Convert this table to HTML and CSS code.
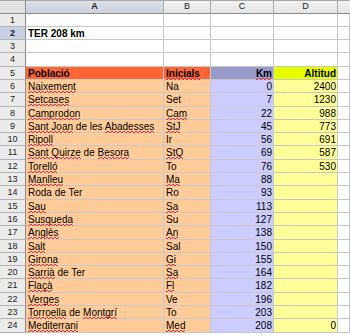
FILE: index.html
```html
<!DOCTYPE html>
<html lang="ca">
<head>
<meta charset="utf-8">
<title>TER 208 km</title>
<link rel="stylesheet" href="styles.css">
</head>
<body>
<div class="sheet">
  <div class="h corner"></div>
  <div class="h col sel">A</div>
  <div class="h col">B</div>
  <div class="h col">C</div>
  <div class="h col">D</div>
  <div class="h col last"></div>

  <div class="h row">1</div><div class="c"></div><div class="c"></div><div class="c"></div><div class="c"></div><div class="c"></div>
  <div class="h row sel">2</div><div class="c b">TER 208 km</div><div class="c"></div><div class="c"></div><div class="c"></div><div class="c"></div>
  <div class="h row">3</div><div class="c"></div><div class="c"></div><div class="c"></div><div class="c"></div><div class="c"></div>
  <div class="h row">4</div><div class="c"></div><div class="c"></div><div class="c"></div><div class="c"></div><div class="c"></div>
  <div class="h row">5</div><div class="c b hd-a">Població</div><div class="c b hd-a"><span class="sp">Inicials</span></div><div class="c b hd-c num"><span class="sp">Km</span></div><div class="c b hd-d num">Altitud</div><div class="c"></div>

  <div class="h row">6</div><div class="c pa"><span class="sp">Naixement</span></div><div class="c pa">Na</div><div class="c pc num">0</div><div class="c pd num">2400</div><div class="c"></div>
  <div class="h row">7</div><div class="c pa"><span class="sp">Setcases</span></div><div class="c pa">Set</div><div class="c pc num">7</div><div class="c pd num">1230</div><div class="c"></div>
  <div class="h row">8</div><div class="c pa"><span class="sp">Camprodon</span></div><div class="c pa"><span class="sp">Cam</span></div><div class="c pc num">22</div><div class="c pd num">988</div><div class="c"></div>
  <div class="h row">9</div><div class="c pa"><span class="sp">Sant Joan</span> de les <span class="sp">Abadesses</span></div><div class="c pa"><span class="sp">StJ</span></div><div class="c pc num">45</div><div class="c pd num">773</div><div class="c"></div>
  <div class="h row">10</div><div class="c pa"><span class="sp">Ripoll</span></div><div class="c pa">Ir</div><div class="c pc num">56</div><div class="c pd num">691</div><div class="c"></div>
  <div class="h row">11</div><div class="c pa"><span class="sp">Sant Quirze</span> de <span class="sp">Besora</span></div><div class="c pa"><span class="sp">StQ</span></div><div class="c pc num">69</div><div class="c pd num">587</div><div class="c"></div>
  <div class="h row">12</div><div class="c pa"><span class="sp">Torelló</span></div><div class="c pa">To</div><div class="c pc num">76</div><div class="c pd num">530</div><div class="c"></div>
  <div class="h row">13</div><div class="c pa"><span class="sp">Manlleu</span></div><div class="c pa"><span class="sp">Ma</span></div><div class="c pc num">88</div><div class="c pd num"></div><div class="c"></div>
  <div class="h row">14</div><div class="c pa">Roda de Ter</div><div class="c pa">Ro</div><div class="c pc num">93</div><div class="c pd num"></div><div class="c"></div>
  <div class="h row">15</div><div class="c pa"><span class="sp">Sau</span></div><div class="c pa"><span class="sp">Sa</span></div><div class="c pc num">113</div><div class="c pd num"></div><div class="c"></div>
  <div class="h row">16</div><div class="c pa"><span class="sp">Susqueda</span></div><div class="c pa">Su</div><div class="c pc num">127</div><div class="c pd num"></div><div class="c"></div>
  <div class="h row">17</div><div class="c pa"><span class="sp">Anglès</span></div><div class="c pa"><span class="sp">An</span></div><div class="c pc num">138</div><div class="c pd num"></div><div class="c"></div>
  <div class="h row">18</div><div class="c pa"><span class="sp">Salt</span></div><div class="c pa">Sal</div><div class="c pc num">150</div><div class="c pd num"></div><div class="c"></div>
  <div class="h row">19</div><div class="c pa"><span class="sp">Girona</span></div><div class="c pa"><span class="sp">Gi</span></div><div class="c pc num">155</div><div class="c pd num"></div><div class="c"></div>
  <div class="h row">20</div><div class="c pa"><span class="sp">Sarrià</span> de Ter</div><div class="c pa"><span class="sp">Sa</span></div><div class="c pc num">164</div><div class="c pd num"></div><div class="c"></div>
  <div class="h row">21</div><div class="c pa"><span class="sp">Flaçà</span></div><div class="c pa"><span class="sp">Fl</span></div><div class="c pc num">182</div><div class="c pd num"></div><div class="c"></div>
  <div class="h row">22</div><div class="c pa"><span class="sp">Verges</span></div><div class="c pa">Ve</div><div class="c pc num">196</div><div class="c pd num"></div><div class="c"></div>
  <div class="h row">23</div><div class="c pa"><span class="sp">Torroella</span> de <span class="sp">Montgrí</span></div><div class="c pa">To</div><div class="c pc num">203</div><div class="c pd num"></div><div class="c"></div>
  <div class="h row">24</div><div class="c pa"><span class="sp">Mediterrani</span></div><div class="c pa"><span class="sp">Med</span></div><div class="c pc num">208</div><div class="c pd num">0</div><div class="c"></div>
</div>
</body>
</html>
```
FILE: styles.css
```css
html, body {
  margin: 0;
  padding: 0;
  background: #ffffff;
}

.sheet {
  display: grid;
  grid-template-columns: 26px 138px 47px 63px 64px 12px;
  grid-template-rows: 13.5px;
  grid-auto-rows: 13.3px;
  width: 350px;
  font-family: "Liberation Sans", Arial, sans-serif;
  font-size: 10px;
  color: #000;
}

.c {
  box-sizing: border-box;
  border-right: 1px solid #c8c8c8;
  border-bottom: 1px solid #c8c8c8;
  padding: 1px 2px 0 2px;
  line-height: 11.5px;
  white-space: nowrap;
}

.b { font-weight: bold; }
.num { text-align: right; padding-right: 1px; }

.hd-a { background: #ff6633; }
.hd-c { background: #9999cc; }
.hd-d { background: #e6ff00; }
.pa { background: #ffcc99; }
.pc { background: #ccccff; }
.pd { background: #ffff99; }

.sp {
  position: relative;
}

.sp::after {
  content: "";
  position: absolute;
  left: 0;
  right: 0;
  bottom: -1px;
  height: 2px;
  background-image:
    repeating-linear-gradient(90deg, transparent 0 2px, #e8303a 2px 4px),
    repeating-linear-gradient(90deg, #e8303a 0 2px, transparent 2px 4px);
  background-size: 100% 1px, 100% 1px;
  background-position: 0 0, 0 1px;
  background-repeat: no-repeat;
  z-index: 1;
}

.h {
  box-sizing: border-box;
  background: #ebebeb;
  color: #222;
  font-size: 9px;
  text-align: center;
  white-space: nowrap;
  overflow: hidden;
}

.col {
  border-top: 1px solid #a8a8a8;
  border-right: 1px solid #a8a8a8;
  border-bottom: 1px solid #8c8c8c;
  background: linear-gradient(#f2f2f2, #e4e4e4);
  line-height: 11.5px;
}

.col.sel {
  background: linear-gradient(#dde0e8, #cdd1dc);
  font-weight: bold;
}

.col.last { border-right: none; }

.corner {
  border-top: 1px solid #a8a8a8;
  border-right: 1px solid #8c8c8c;
  border-bottom: 1px solid #8c8c8c;
  background: #e2e2e2;
}

.row {
  border-right: 1px solid #8c8c8c;
  border-bottom: 1px solid #b4b4b4;
  line-height: 13px;
  padding-top: 0;
}

.row.sel {
  background: #c8d1e6;
  font-weight: bold;
}
```
